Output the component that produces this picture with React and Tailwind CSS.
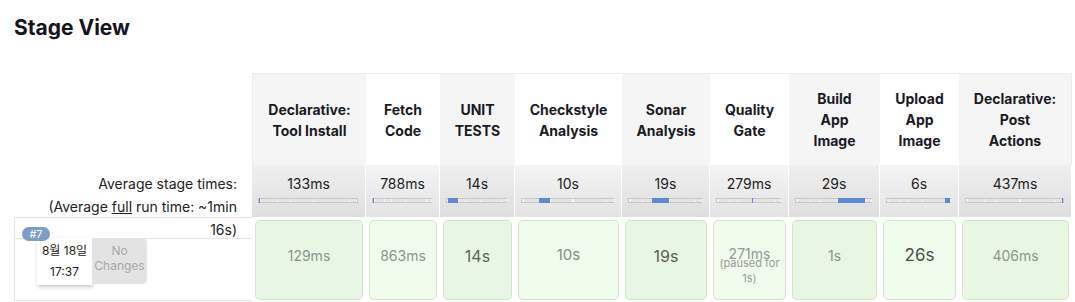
const stages = [
  { name: ['Declarative:', 'Tool Install'], avg: '133ms', secs: 0.133, run: '129ms', text: 'text-[14px] text-[#8d958d]', dark: true },
  { name: ['Fetch', 'Code'], avg: '788ms', secs: 0.788, run: '863ms', text: 'text-[14px] text-[#8d958d]', dark: false },
  { name: ['UNIT', 'TESTS'], avg: '14s', secs: 14, run: '14s', text: 'text-[16px] text-[#5c645c]', dark: true },
  { name: ['Checkstyle', 'Analysis'], avg: '10s', secs: 10, run: '10s', text: 'text-[15px] text-[#858d85]', dark: false },
  { name: ['Sonar', 'Analysis'], avg: '19s', secs: 19, run: '19s', text: 'text-[16px] text-[#586058]', dark: true },
  { name: ['Quality', 'Gate'], avg: '279ms', secs: 0.279, run: '271ms', text: 'text-[14px] text-[#979797]', dark: false, paused: true },
  { name: ['Build', 'App', 'Image'], avg: '29s', secs: 29, run: '1s', text: 'text-[14px] text-[#8d958d]', dark: true },
  { name: ['Upload', 'App', 'Image'], avg: '6s', secs: 6, run: '26s', text: 'text-[17px] text-[#484e48]', dark: false },
  { name: ['Declarative:', 'Post', 'Actions'], avg: '437ms', secs: 0.437, run: '406ms', text: 'text-[14px] text-[#8d958d]', dark: true },
]

const total = stages.reduce((s, st) => s + st.secs, 0)
const starts = stages.reduce((acc, st, i) => [...acc, (acc[i] ?? 0) + st.secs], [0])

const TimeBar = ({ index }) => {
  const left = (starts[index] / total) * 100
  const width = (stages[index].secs / total) * 100
  return (
    <div className="relative h-[5px] ml-[6px] mr-[7px] mt-[4px] bg-[#e4e4e4] border border-[#c6c6c6]">
      {starts.slice(1, -1).map((c, i) => (
        <div key={i} className="absolute top-0 bottom-0 w-px bg-[#f6f6f6]" style={{ left: `${(c / total) * 100}%` }} />
      ))}
      <div
        className="absolute -top-px -bottom-px bg-[#5b89d4] min-w-[1px]"
        style={{ left: `${left}%`, width: `${width}%` }}
      />
    </div>
  )
}

export default function App() {
  return (
    <div className="min-h-[302px] bg-white pt-[14px] font-[Inter,'Noto_Sans_CJK_KR',sans-serif] overflow-hidden">
      <h2 className="ml-[14px] h-7 text-[21px] leading-7 font-bold text-[#14141f]">Stage View</h2>

      <div className="mt-[31px] grid grid-cols-[252px_114px_74px_75px_107px_88px_79px_91px_79px_113px] grid-rows-[92px_52px_84px]">
        {/* header row */}
        <div />
        {stages.map((st, i) => (
          <div
            key={st.avg + i}
            className={`flex items-center justify-center text-center border-t border-[#ececec] text-[14px] leading-[21px] font-bold text-[#1a1a24] ${
              st.dark ? 'bg-[#f5f5f5]' : 'bg-white'
            } ${i === 0 ? 'border-l' : ''} ${i === stages.length - 1 ? 'border-r' : ''}`}
          >
            <div>
              {st.name.map((line) => (
                <div key={line}>{line}</div>
              ))}
            </div>
          </div>
        ))}

        {/* average row */}
        <div className="h-[52px] pt-[7px] pr-[15px] text-right text-[14px] leading-[23px] text-[#222]">
          <div>Average stage times:</div>
          <div>
            (Average <span className="underline">full</span> run time: ~1min
          </div>
          <div>16s)</div>
        </div>
        {stages.map((st, i) => (
          <div
            key={'avg' + i}
            className={`pt-[9px] border-r border-white bg-linear-to-b ${
              st.dark ? 'from-[#efefef] to-[#dedede]' : 'from-[#f4f4f4] to-[#e3e3e3]'
            }`}
          >
            <div className="text-center text-[14px] leading-5 text-[#222]">{st.avg}</div>
            <TimeBar index={i} />
          </div>
        ))}

        {/* build row */}
        <div className="ml-[14px] h-[84px] flex flex-col relative border border-r-0 border-[#e4e4e4]">
          <div className="h-[21px] shrink-0 border-b border-[#e6e6e6]" />
          <div className="flex ml-[22px] -mt-px">
            <div className="w-[55px] h-[47px] bg-white shadow-[1px_2px_4px_rgba(0,0,0,0.22)] text-center text-[12px] leading-[21px] text-[#222] pt-[2px]">
              <div>8월 18일</div>
              <div>17:37</div>
            </div>
            <div className="w-[55px] h-[46px] bg-[#e3e3e3] rounded-r-[5px] text-center text-[12px] leading-[15px] text-[#a8a8a8] pt-[5px]">
              <div>No</div>
              <div>Changes</div>
            </div>
          </div>
          <span className="absolute left-[7px] top-[9px] w-[28px] h-[14px] rounded-full bg-[#7d9dc8] text-white text-[11px] leading-[14px] text-center">
            #7
          </span>
        </div>
        {stages.map((st, i) => (
          <div key={'run' + i} className="px-[3px] pt-[3px]">
            <div
              className={`relative h-[80px] rounded-[5px] border border-[#d3e4cf] ${
                st.dark ? 'bg-[#e8f7e4]' : 'bg-[#f0fded]'
              }`}
            >
              <div className="h-[69px] flex items-center justify-center">
                <span className={`${st.text} ${st.paused ? '-mt-[4px]' : ''}`}>{st.run}</span>
              </div>
              {st.paused && (
                <div className="absolute left-0 right-0 top-[35px] text-center text-[11px] leading-[15px] text-[#9a9a9a]">
                  (paused for
                  <br />
                  1s)
                </div>
              )}
            </div>
          </div>
        ))}
      </div>
    </div>
  )
}
